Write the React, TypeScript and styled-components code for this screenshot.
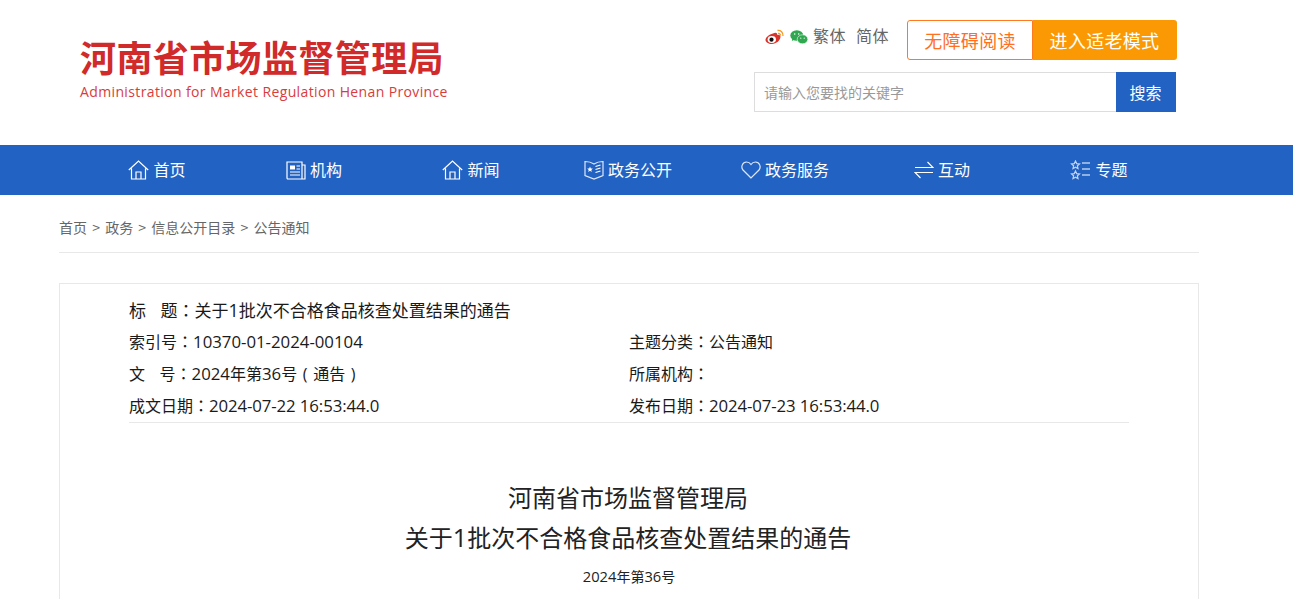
import React from 'react';
import styled, { createGlobalStyle } from 'styled-components';

const GlobalStyle = createGlobalStyle`
  html, body {
    margin: 0;
    padding: 0;
    height: 100%;
    overflow: hidden;
    background: #ffffff;
    font-family: "Noto Sans CJK SC", "Liberation Sans", sans-serif;
  }
  * {
    box-sizing: border-box;
  }
`;

const Header = styled.header`
  display: flex;
  justify-content: space-between;
  width: 1097px;
  height: 145px;
  margin-left: 80px;
`;

const Logo = styled.div`
  display: flex;
  flex-direction: column;
  padding-top: 33px;
`;

const LogoTitle = styled.div`
  font-size: 36px;
  line-height: 46px;
  font-weight: 700;
  letter-spacing: 0.4px;
  color: #d12a2a;
  white-space: nowrap;
`;

const LogoSub = styled.div`
  margin-top: 3px;
  font-family: "Open Sans", "Liberation Sans", sans-serif;
  font-size: 14px;
  line-height: 20px;
  letter-spacing: 0.37px;
  color: #d83c3c;
  white-space: nowrap;
`;

const Tools = styled.div`
  display: flex;
  flex-direction: column;
  align-items: flex-end;
  padding-top: 20px;
  gap: 12px;
`;

const ToolRow = styled.div`
  display: flex;
  align-items: center;
  height: 40px;
`;

const Social = styled.div`
  display: flex;
  align-items: center;
  gap: 5px;
  margin-right: 5px;
  padding-bottom: 6px;
`;

const Lang = styled.a`
  font-size: 16px;
  line-height: 24px;
  letter-spacing: 0.5px;
  color: #666666;
  margin-right: 10px;
  padding-bottom: 10px;
`;

const Accessible = styled.a`
  display: flex;
  align-items: center;
  justify-content: center;
  width: 126px;
  height: 40px;
  font-size: 18px;
  letter-spacing: 0.3px;
  color: #ff6f1e;
  background: #ffffff;
  border: 1px solid #ff7a1f;
  border-radius: 3px 0 0 3px;
  margin-left: 8px;
`;

const Elder = styled.a`
  display: flex;
  align-items: center;
  justify-content: center;
  width: 144px;
  height: 40px;
  padding-right: 1px;
  font-size: 18px;
  letter-spacing: 0.3px;
  color: #ffffff;
  background: #fb9904;
  border-radius: 0 3px 3px 0;
`;

const SearchRow = styled.form`
  display: flex;
  height: 40px;
  margin: 0 1px 0 0;
`;

const SearchInput = styled.input`
  width: 362px;
  height: 40px;
  padding: 0 9px;
  font-family: inherit;
  font-size: 14px;
  border: 1px solid #dddddd;
  border-right: 0;
  outline: none;
  &::placeholder {
    color: #999999;
    opacity: 1;
  }
`;

const SearchButton = styled.button`
  width: 60px;
  height: 40px;
  padding: 0 1px 0 0;
  font-family: inherit;
  font-size: 16px;
  color: #ffffff;
  background: #2262c3;
  border: 0;
`;

const Nav = styled.nav`
  height: 50px;
  background: #2262c3;
  padding-left: 78.5px;
`;

const NavList = styled.ul`
  display: grid;
  grid-template-columns: repeat(7, 157px);
  list-style: none;
  margin: 0;
  padding: 0;
`;

const NavItem = styled.li`
  display: flex;
  align-items: center;
  justify-content: center;
  gap: 4px;
  height: 50px;
  font-size: 16px;
  line-height: 22px;
  color: #ffffff;
  svg {
    flex: none;
  }
`;

const NavLabel = styled.span`
  margin-bottom: 3px;
`;

const Main = styled.main`
  width: 1140px;
  margin-left: 59px;
`;

const Crumbs = styled.div`
  display: flex;
  align-items: center;
  gap: 5.2px;
  height: 58px;
  padding-top: 6px;
  font-size: 14px;
  color: #666666;
  border-bottom: 1px solid #e8e8e8;
`;

const Card = styled.section`
  margin-top: 30px;
  padding: 10px 69px 100px;
  border: 1px solid #e8e8e8;
`;

const Meta = styled.div`
  display: grid;
  grid-template-columns: 500px 500px;
  padding-bottom: 1px;
  border-bottom: 1px solid #e8e8e8;
`;

const MetaCell = styled.div<{ $wide?: boolean }>`
  grid-column: ${(p) => (p.$wide ? '1 / 3' : 'auto')};
  height: ${(p) => (p.$wide ? '31px' : '32px')};
  font-size: ${(p) => (p.$wide ? '17px' : '16px')};
  line-height: ${(p) => (p.$wide ? '31px' : '32px')};
  color: #1a1a1a;
  white-space: pre;
`;

// the space between the two characters of a short label
const LabelGap = styled.span`
  display: inline-block;
  width: 14.5px;
`;

// full-width colons sit centred in their cell in the reference
const Mark = styled.span`
  font-family: "Noto Sans CJK TC", sans-serif;
`;

const Bracket = styled.span`
  display: inline-block;
  width: 1em;
  font-family: "Open Sans", "Liberation Sans", sans-serif;
  text-align: center;
`;

const Num = styled.span<{ $tight?: boolean }>`
  font-family: "Open Sans", "Liberation Sans", sans-serif;
  font-size: 1.05em;
  letter-spacing: ${(p) => (p.$tight ? '-0.1px' : '0')};
`;

const Heading = styled.h1`
  margin: 54px 0 0 -2px;
  font-size: 24px;
  line-height: 40px;
  font-weight: 400;
  text-align: center;
  color: #222222;
`;

const DocNumber = styled.p`
  margin: 7px 0 0;
  font-size: 14px;
  line-height: 24px;
  text-align: center;
  color: #222222;
`;

const line = { fill: 'none', stroke: '#fff', strokeWidth: 1.2 };

const HomeIcon = () => (
  <svg width="21" height="20" viewBox="0 0 21 20">
    <path {...line} d="M.8 10 10.500 1l9.700 9M3.500 8.500V19h14V8.500M8 19v-7h5v7" />
  </svg>
);

const OrgIcon = () => (
  <svg width="20" height="19" viewBox="0 0 20 19">
    <path {...line} d="M1 1h15v17H2a1 1 0 0 1-1-1zM16 4h3v14h-3" />
    <path fill="#fff" d="M4 4.500h5v4H4z" />
    <path {...line} d="M10.500 5h3.500M10.500 8h3.500M4 11h10M4 14h10" />
  </svg>
);

const OpenIcon = () => (
  <svg width="20" height="20" viewBox="0 0 20 20">
    <path {...line} stroke="#dfe8f8" d="M1 1.500c3 0 6 .5 9 2.500 3-2 6-2.500 9-2.500v14L10 19l-9-3.500z" />
    <path fill="#fff" d="m6 6.500.8 1.900 2 .2-1.500 1.300.5 2-1.800-1.100-1.800 1.100.5-2L3.200 8.600l2-.2z" />
    <path {...line} d="M11.500 6.500l5-1.500M11.500 9.500l5-1.500M11.500 12.500l5-1.500" />
  </svg>
);

const HeartIcon = () => (
  <svg width="20" height="18" viewBox="0 0 20 18">
    <path {...line} stroke="#dfe8f8" d="M10 17 2 9C-.5 6 1.500 1 5.500 1c2 0 3.500 1 4.500 2.500C11 2 12.500 1 14.500 1c4 0 6 5 3.500 8z" />
  </svg>
);

const SwapIcon = () => (
  <svg width="20" height="18" viewBox="0 0 20 18">
    <path {...line} d="M1 6.500h18L13.500 1M19 11.500H1L6.500 17" />
  </svg>
);

const TopicIcon = () => (
  <svg width="21" height="20" viewBox="0 0 21 20">
    <path {...line} stroke="#c4d4ef" d="m5.500 1 1.200 2.600 2.800.3-2.100 1.900.6 2.800-2.500-1.400L3 8.600l.6-2.800L1.500 3.900l2.800-.3zM5.500 11l1.200 2.600 2.800.3-2.100 1.900.6 2.800-2.500-1.400L3 18.600l.6-2.800-2.100-1.900 2.800-.3z" />
    <path {...line} d="M12 3h8M12 9h8M12 15h8" />
  </svg>
);

const WeiboIcon = () => (
  <svg width="20" height="17" viewBox="0 0 20 17">
    <path fill="#d9342b" d="M8 4.500c2-1.200 3.500-1 4 0 .3.700 0 1.500 0 1.500 2-.5 3.500.3 3.500 1.700C15.500 11 11.500 15 6.800 15 3.500 15 .5 13.500.5 10.800.5 8.500 4 5.500 8 4.500z" />
    <ellipse cx="6.800" cy="10.500" rx="4.200" ry="3.400" fill="#fff" />
    <circle cx="6.500" cy="10.700" r="2.100" fill="#111" />
    <path fill="none" stroke="#f39a1e" strokeWidth="1.300" d="M12.500 1.500c3-.7 6 2 5.500 5.500M13 4.500c1.500-.3 2.600.8 2.300 2.200" />
  </svg>
);

const WechatIcon = () => (
  <svg width="18" height="15" viewBox="0 0 18 15">
    <ellipse cx="6.800" cy="5.500" rx="6.500" ry="5.200" fill="#2fa84f" />
    <path fill="#2fa84f" d="m2.500 8-.7 3L5 9.500z" />
    <ellipse cx="12.500" cy="9.300" rx="5.300" ry="4.500" fill="#2fa84f" stroke="#fff" strokeWidth=".6" />
    <circle cx="4.700" cy="4" r=".8" fill="#fff" />
    <circle cx="8.700" cy="4" r=".8" fill="#fff" />
    <circle cx="10.800" cy="8.200" r=".6" fill="#fff" />
    <circle cx="14.200" cy="8.200" r=".6" fill="#fff" />
  </svg>
);

const navItems = [
  { label: '首页', icon: <HomeIcon /> },
  { label: '机构', icon: <OrgIcon /> },
  { label: '新闻', icon: <HomeIcon /> },
  { label: '政务公开', icon: <OpenIcon /> },
  { label: '政务服务', icon: <HeartIcon /> },
  { label: '互动', icon: <SwapIcon /> },
  { label: '专题', icon: <TopicIcon /> },
];

function App() {
  return (
    <>
      <GlobalStyle />
      <Header>
        <Logo>
          <LogoTitle>河南省市场监督管理局</LogoTitle>
          <LogoSub>Administration for Market Regulation Henan Province</LogoSub>
        </Logo>
        <Tools>
          <ToolRow>
            <Social>
              <WeiboIcon />
              <WechatIcon />
            </Social>
            <Lang>繁体</Lang>
            <Lang>简体</Lang>
            <Accessible>无障碍阅读</Accessible>
            <Elder>进入适老模式</Elder>
          </ToolRow>
          <SearchRow>
            <SearchInput placeholder="请输入您要找的关键字" />
            <SearchButton type="button">搜索</SearchButton>
          </SearchRow>
        </Tools>
      </Header>
      <Nav>
        <NavList>
          {navItems.map((item) => (
            <NavItem key={item.label}>
              {item.icon}
              <NavLabel>{item.label}</NavLabel>
            </NavItem>
          ))}
        </NavList>
      </Nav>
      <Main>
        <Crumbs>
          <span>首页</span>&gt;<span>政务</span>&gt;<span>信息公开目录</span>&gt;<span>公告通知</span>
        </Crumbs>
        <Card>
          <Meta>
            <MetaCell $wide>
              标<LabelGap />题<Mark>：</Mark>关于<Num>1</Num>批次不合格食品核查处置结果的通告
            </MetaCell>
            <MetaCell>
              索引号<Mark>：</Mark>
              <Num>10370-01-2024-00104</Num>
            </MetaCell>
            <MetaCell>
              主题分类<Mark>：</Mark>公告通知
            </MetaCell>
            <MetaCell>
              文<LabelGap />号<Mark>：</Mark>
              <Num>2024</Num>年第<Num>36</Num>号<Bracket>(</Bracket>通告<Bracket>)</Bracket>
            </MetaCell>
            <MetaCell>
              所属机构<Mark>：</Mark>
            </MetaCell>
            <MetaCell>
              成文日期<Mark>：</Mark>
              <Num $tight>2024-07-22 16:53:44.0</Num>
            </MetaCell>
            <MetaCell>
              发布日期<Mark>：</Mark>
              <Num $tight>2024-07-23 16:53:44.0</Num>
            </MetaCell>
          </Meta>
          <Heading>
            河南省市场监督管理局
            <br />
            关于<Num>1</Num>批次不合格食品核查处置结果的通告
          </Heading>
          <DocNumber>
            <Num>2024</Num>年第<Num>36</Num>号
          </DocNumber>
        </Card>
      </Main>
    </>
  );
}

export default App;
